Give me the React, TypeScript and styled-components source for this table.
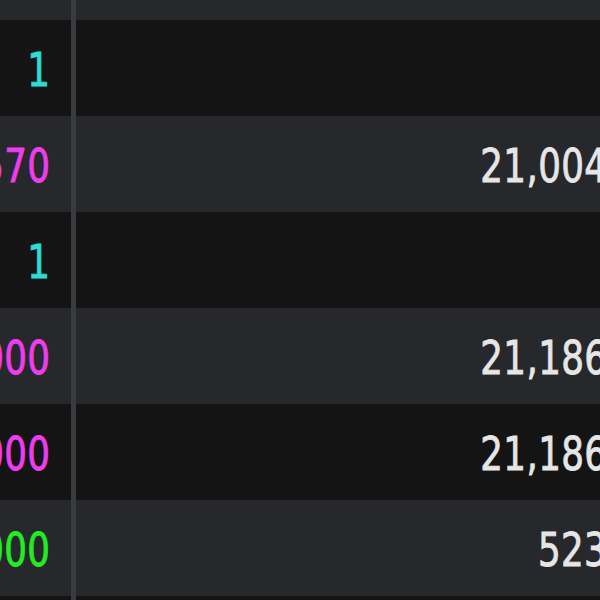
import React from 'react';
import styled, { createGlobalStyle } from 'styled-components';

type Tone = 'count' | 'price' | 'buy' | 'plain';

interface IRow {
    qty: string;
    qtyTone: Tone;
    amount: string;
}

const toneColors: Record<Tone, string> = {
    count: '#2cdcd4',
    price: '#ee3cee',
    buy: '#22ec22',
    plain: '#e6e6e6',
};

const rows: IRow[] = [
    { qty: '1', qtyTone: 'count', amount: '' },
    { qty: '10,570', qtyTone: 'price', amount: '21,004' },
    { qty: '1', qtyTone: 'count', amount: '' },
    { qty: '10,000', qtyTone: 'price', amount: '21,186' },
    { qty: '10,000', qtyTone: 'price', amount: '21,186' },
    { qty: '10,000', qtyTone: 'buy', amount: '523' },
    { qty: '1', qtyTone: 'count', amount: '' },
];

const GlobalStyle = createGlobalStyle`
    html, body {
        margin: 0;
        padding: 0;
        overflow: hidden;
        background: #141414;
    }
`;

const Table = styled.div`
    width: 628px;
    display: flex;
    flex-direction: column;
    font-family: 'DejaVu Sans', 'Liberation Sans', sans-serif;
`;

const HeaderRow = styled.div`
    display: grid;
    grid-template-columns: 76px 1fr;
    height: 20px;
    background: #27282c;
`;

const Row = styled.div<{ $striped: boolean }>`
    display: grid;
    grid-template-columns: 76px 1fr;
    height: 96px;
    background: ${(props) => (props.$striped ? '#27282c' : '#141414')};
`;

const Cell = styled.div<{ $divider?: boolean }>`
    display: flex;
    align-items: center;
    justify-content: flex-end;
    padding: 3px 21px 0 0;
    box-sizing: border-box;
    white-space: nowrap;
    border-right: ${(props) => (props.$divider ? '5px solid #3a3b3f' : 'none')};
`;

const Value = styled.span<{ $tone: Tone }>`
    display: inline-block;
    font-size: 47px;
    line-height: 1;
    letter-spacing: 0.5px;
    color: ${(props) => toneColors[props.$tone]};
    -webkit-text-stroke: 0.9px currentColor;
    transform: scaleX(0.76);
    transform-origin: right center;
`;

export default function App() {
    return (
        <>
            <GlobalStyle />
            <Table>
                <HeaderRow>
                    <Cell $divider />
                    <Cell />
                </HeaderRow>
                {rows.map((row, i) => (
                    <Row key={i} $striped={i % 2 === 1}>
                        <Cell $divider>
                            <Value $tone={row.qtyTone}>{row.qty}</Value>
                        </Cell>
                        <Cell>
                            <Value $tone="plain">{row.amount}</Value>
                        </Cell>
                    </Row>
                ))}
            </Table>
        </>
    );
}
